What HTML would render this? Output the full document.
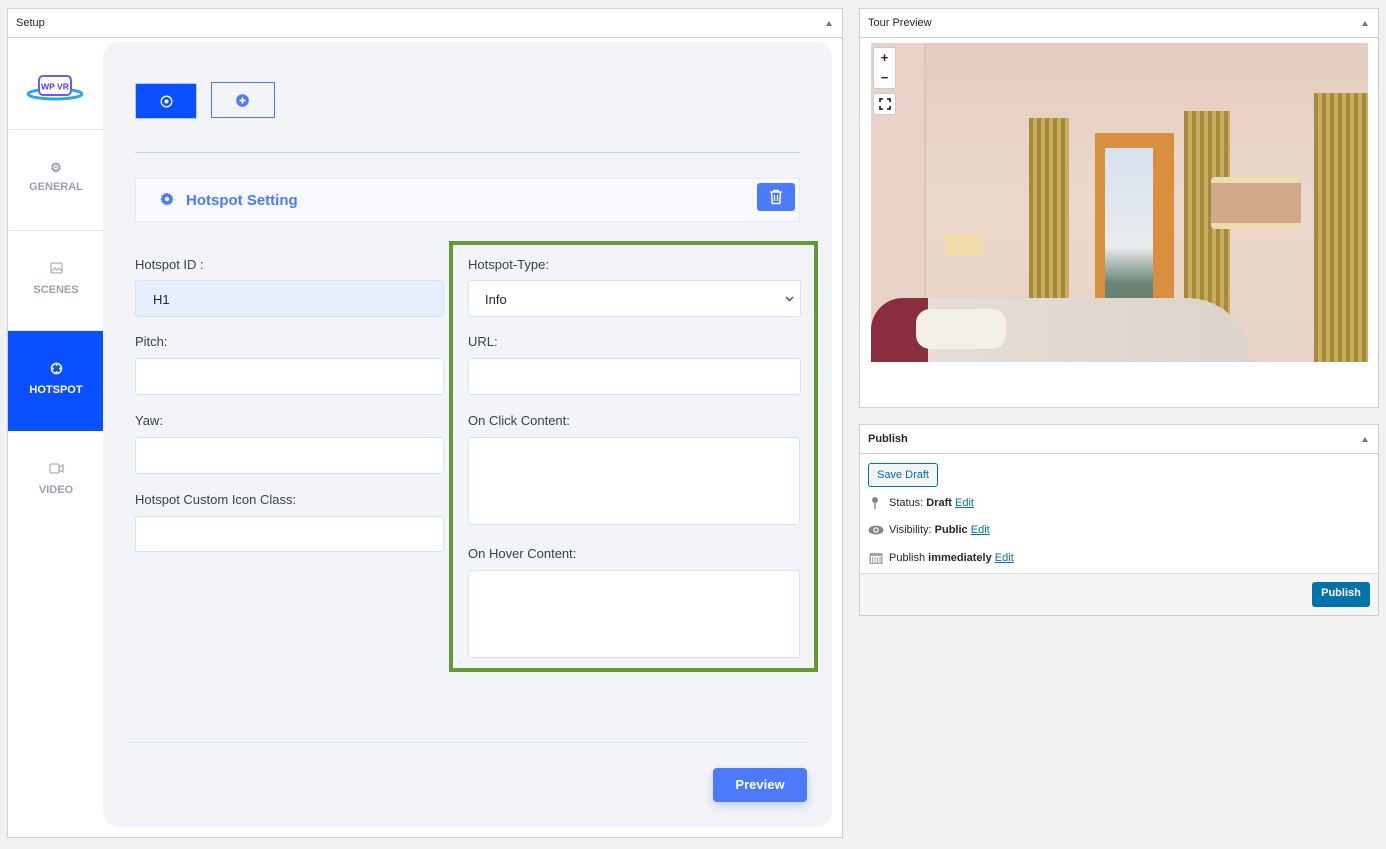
<!DOCTYPE html>
<html><head><meta charset="utf-8"><style>
*{box-sizing:border-box;margin:0;padding:0}
body{width:1386px;height:849px;background:#f1f1f1;font-family:"Liberation Sans",sans-serif;position:relative;overflow:hidden;color:#23282d}
.a{position:absolute}
.panel{background:#fff;border:1px solid #ccd0d4}
.ph{position:absolute;left:0;right:0;top:0;height:29px;border-bottom:1px solid #ccd0d4;font-size:11px;font-weight:bold;padding:8px 8px;}
.tri{position:absolute;right:10px;top:12px;width:0;height:0;border-left:3px solid transparent;border-right:3px solid transparent;border-bottom:5px solid #72777c}
.nav{position:absolute;left:0;width:96px;text-align:center;font-size:11px;font-weight:bold;color:#9aa1ae;border-bottom:1px solid #e5e7ee}
.lbl{position:absolute;font-size:13px;color:#3a3f4a}
.inp{position:absolute;background:#fff;border:1px solid #d6e1fb;border-radius:3px}
.pl{font-size:11px;position:absolute;left:29px;color:#23282d}
.pl u{color:#0073aa}
</style></head><body>

<div class="a panel" style="left:7px;top:8px;width:836px;height:830px">
 <div class="ph" style="font-weight:normal;color:#23282d">Setup<span class="tri"></span></div>
</div>
<div class="a" style="left:8px;top:38px;width:96px;height:799px;background:#fff">
 <div class="nav" style="top:0;height:92px">
  <svg class="a" style="left:19px;top:34px" width="56" height="30" viewBox="0 0 56 30"><ellipse cx="28" cy="22" rx="27" ry="5" fill="none" stroke="#2ea6f0" stroke-width="3"/><rect x="12" y="4" width="32" height="19" rx="4" fill="#fff" stroke="#6a5cf6" stroke-width="2"/><text x="28" y="17.5" font-size="8.5" font-weight="bold" text-anchor="middle" fill="#4b3ee0" font-family="Liberation Sans">WP VR</text></svg>
 </div>
 <div class="nav" style="top:92px;height:101px"><div style="margin-top:30px;font-size:13px">⚙</div><div style="margin-top:5px">GENERAL</div></div>
 <div class="nav" style="top:193px;height:100px"><svg style="margin-top:31px" width="13" height="12" viewBox="0 0 13 12"><rect x="1" y="1" width="11" height="10" rx="1.5" fill="none" stroke="#aab0bd" stroke-width="1.3"/><path d="M2 9l3-3 2 2 2-2 3 3" fill="none" stroke="#aab0bd" stroke-width="1.2"/></svg><div style="margin-top:7px">SCENES</div></div>
 <div class="nav" style="top:293px;height:100px;background:#0a50ff;color:#fff;border:none"><svg style="margin-top:31px" width="13" height="13" viewBox="0 0 13 13"><circle cx="6.5" cy="6.5" r="5" fill="none" stroke="#fff" stroke-width="1.5"/><path d="M6.5 1v3M6.5 9v3M1 6.5h3M9 6.5h3" stroke="#fff" stroke-width="1.5"/></svg><div style="margin-top:6px">HOTSPOT</div></div>
 <div class="nav" style="top:393px;height:100px;border:none"><svg style="margin-top:32px" width="15" height="11" viewBox="0 0 15 11"><rect x="1" y="1" width="9" height="9" rx="1.5" fill="none" stroke="#aab0bd" stroke-width="1.3"/><path d="M10 4l4-2v7l-4-2" fill="none" stroke="#aab0bd" stroke-width="1.3"/></svg><div style="margin-top:7px">VIDEO</div></div>
</div>
<div class="a" style="left:103px;top:42px;width:729px;height:785px;background:#f3f4f8;border-radius:16px"></div>
<div class="a" style="left:135px;top:83px;width:62px;height:36px;background:#0a50ff;border:1px solid #b9c9f5"><svg class="a" style="left:24px;top:11px" width="13" height="13"><circle cx="6.5" cy="6.5" r="5.3" fill="none" stroke="#fff" stroke-width="1.3"/><circle cx="6.5" cy="6.5" r="2" fill="#fff"/></svg></div>
<div class="a" style="left:211px;top:82px;width:64px;height:36px;border:1px solid #4b7bfb"><svg class="a" style="left:24px;top:11px" width="13" height="13"><circle cx="6.5" cy="6.5" r="6.3" fill="#4b7bfb"/><path d="M6.5 3.5v6M3.5 6.5h6" stroke="#fff" stroke-width="1.8"/></svg></div>
<div class="a" style="left:135px;top:152px;width:665px;height:1px;background:#c6d5f6"></div>
<div class="a" style="left:135px;top:178px;width:665px;height:44px;background:#f8f9fe;border:1px solid #e6eaf6"></div>
<svg class="a" style="left:160px;top:192px" width="14" height="14" viewBox="0 0 14 14"><path d="M7 0.5l1.3 1.6 2-.6.5 2 2 .6-.6 2L13.5 7l-1.3 1.3.6 2-2 .6-.5 2-2-.6L7 13.5l-1.3-1.3-2 .6-.5-2-2-.6.6-2L.5 7l1.3-1.3-.6-2 2-.6.5-2 2 .6z" fill="#4b7bfb"/><circle cx="7" cy="7" r="2.2" fill="#f8f9fe"/></svg>
<div class="a" style="left:186px;top:192px;font-size:15px;font-weight:bold;color:#4b7bfb">Hotspot Setting</div>
<div class="a" style="left:757px;top:183px;width:38px;height:28px;background:#4b7bfb;border-radius:3px"><svg class="a" style="left:12px;top:6px" width="14" height="16" viewBox="0 0 14 16"><path d="M1 3h12M5 3V1.5h4V3M2.5 3.5l.8 11h7.4l.8-11" fill="none" stroke="#fff" stroke-width="1.5"/><path d="M5.5 6v6M8.5 6v6" stroke="#fff" stroke-width="1.2"/></svg></div>

<div class="lbl" style="left:135px;top:257px">Hotspot ID :</div>
<div class="inp" style="left:135px;top:280px;width:309px;height:37px;background:#e8effc;font-size:13px;padding:11px 17px">H1</div>
<div class="lbl" style="left:135px;top:334px">Pitch:</div>
<div class="inp" style="left:135px;top:358px;width:309px;height:37px"></div>
<div class="lbl" style="left:135px;top:413px">Yaw:</div>
<div class="inp" style="left:135px;top:437px;width:309px;height:37px"></div>
<div class="lbl" style="left:135px;top:492px">Hotspot Custom Icon Class:</div>
<div class="inp" style="left:135px;top:516px;width:309px;height:36px"></div>

<div class="a" style="left:449px;top:241px;width:369px;height:431px;border:4px solid #629a38"></div>
<div class="lbl" style="left:468px;top:257px">Hotspot-Type:</div>
<div class="inp" style="left:468px;top:280px;width:333px;height:37px;font-size:13px;padding:11px 16px">Info<svg class="a" style="right:6px;top:15px" width="9" height="6"><path d="M1 1l3.5 3.5L8 1" fill="none" stroke="#444" stroke-width="1.3"/></svg></div>
<div class="lbl" style="left:468px;top:334px">URL:</div>
<div class="inp" style="left:468px;top:358px;width:333px;height:37px"></div>
<div class="lbl" style="left:468px;top:413px">On Click Content:</div>
<div class="inp" style="left:468px;top:437px;width:332px;height:88px"></div>
<div class="lbl" style="left:468px;top:546px">On Hover Content:</div>
<div class="inp" style="left:468px;top:570px;width:332px;height:88px"></div>

<div class="a" style="left:128px;top:742px;width:679px;height:1px;background:#dfe6f7"></div>
<div class="a" style="left:713px;top:768px;width:94px;height:34px;background:#4b7bfb;border-radius:4px;color:#fff;font-size:13px;font-weight:bold;text-align:center;line-height:34px;box-shadow:0 4px 10px rgba(75,123,251,.3)">Preview</div>

<div class="a panel" style="left:859px;top:8px;width:520px;height:400px">
 <div class="ph" style="font-weight:normal">Tour Preview<span class="tri"></span></div>
 <div class="a" style="left:11px;top:34px;width:497px;height:319px;overflow:hidden;background:linear-gradient(180deg,#e3cdbe 0%,#ecd8cc 50%,#e6d2c6 100%)">
  <div class="a" style="left:0;top:0;width:55px;height:319px;background:#e9d3c8;border-right:2px solid #dcc3b4"></div>
  <div class="a" style="left:158px;top:75px;width:40px;height:240px;background:repeating-linear-gradient(90deg,#a58a3d 0 4px,#c9ad5c 4px 8px)"></div>
  <div class="a" style="left:224px;top:90px;width:79px;height:200px;background:#d8903e"></div>
  <div class="a" style="left:234px;top:105px;width:48px;height:180px;background:linear-gradient(180deg,#d6e2ef 0%,#e8ecee 55%,#6d8578 75%,#5d7565 100%)"></div>
  <div class="a" style="left:313px;top:68px;width:46px;height:235px;background:repeating-linear-gradient(90deg,#a58a3d 0 4px,#c9ad5c 4px 8px)"></div>
  <div class="a" style="left:443px;top:50px;width:54px;height:269px;background:repeating-linear-gradient(90deg,#a58a3d 0 4px,#c9ad5c 4px 8px)"></div>
  <div class="a" style="left:340px;top:134px;width:90px;height:52px;background:#d1a98a;border-radius:4px;border-top:6px solid #ecdcb0;border-bottom:6px solid #ecdcb0"></div>
  <div class="a" style="left:74px;top:191px;width:38px;height:22px;background:#efdcaa"></div>
  <div class="a" style="left:0;top:255px;width:380px;height:64px;background:linear-gradient(90deg,#8a2e3e 0 15%,#e6ddd6 15%,#ddd3cb 100%);border-radius:40px 80px 0 0"></div>
  <div class="a" style="left:45px;top:266px;width:90px;height:40px;background:#f3efe9;border-radius:14px"></div>
 </div>
 <div class="a" style="left:13px;top:38px;width:23px;height:42px;background:#fff;border:1px solid #ccc;border-radius:3px;font-size:13px;font-weight:bold;text-align:center;line-height:20px">+<br>−</div>
 <div class="a" style="left:13px;top:84px;width:23px;height:22px;background:#fff;border:1px solid #ccc;border-radius:3px"><svg class="a" style="left:5px;top:4px" width="12" height="12"><path d="M1 4V1h3M8 1h3v3M11 8v3H8M4 11H1V8" fill="none" stroke="#111" stroke-width="1.6"/></svg></div>
</div>

<div class="a panel" style="left:859px;top:424px;width:520px;height:192px">
 <div class="ph">Publish<span class="tri"></span></div>
 <div class="a" style="left:8px;top:38px;width:70px;height:24px;border:1px solid #0071a1;border-radius:3px;background:#f3f5f6;color:#0071a1;font-size:11px;text-align:center;line-height:22px">Save Draft</div>
 <svg class="a" style="left:11px;top:71px" width="8" height="14"><circle cx="4" cy="4" r="3" fill="#82878c"/><rect x="3.3" y="6" width="1.4" height="7" fill="#82878c"/></svg>
 <div class="pl" style="top:72px">Status: <b>Draft</b> <u>Edit</u></div>
 <svg class="a" style="left:8px;top:100px" width="16" height="10"><ellipse cx="8" cy="5" rx="7.5" ry="4.5" fill="#82878c"/><circle cx="8" cy="5" r="2.8" fill="#fff"/><circle cx="8" cy="5" r="1.6" fill="#82878c"/></svg>
 <div class="pl" style="top:99px">Visibility: <b>Public</b> <u>Edit</u></div>
 <svg class="a" style="left:9px;top:126px" width="14" height="13"><rect x="0.5" y="2" width="13" height="11" fill="#a0a5aa"/><rect x="2" y="5" width="10" height="7" fill="#fff"/><path d="M3.5 6v6M6 6v6M8.5 6v6M11 6v6" stroke="#a0a5aa"/></svg>
 <div class="pl" style="top:127px">Publish <b>immediately</b> <u>Edit</u></div>
 <div class="a" style="left:0;right:0;top:148px;bottom:0;background:#f5f5f5;border-top:1px solid #ddd"></div>
 <div class="a" style="left:452px;top:157px;width:58px;height:25px;background:#0073aa;border-radius:3px;color:#fff;font-size:11px;font-weight:bold;text-align:center;line-height:23px">Publish</div>
</div>
</body></html>
